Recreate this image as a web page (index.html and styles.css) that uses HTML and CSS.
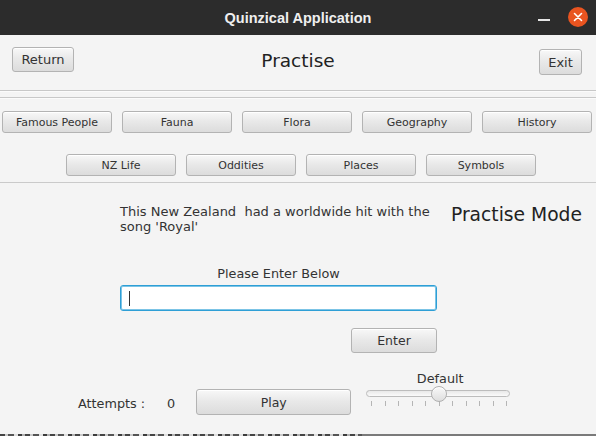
FILE: index.html
```html
<!DOCTYPE html>
<html>
<head>
<meta charset="utf-8">
<link rel="stylesheet" href="styles.css">
</head>
<body>
<div class="window">
  <div class="titlebar">
    <div></div>
    <div class="title">Quinzical Application</div>
    <div class="controls">
      <span class="minimize"></span>
      <span class="close">
        <svg width="10" height="10" viewBox="0 0 10 10"><path d="M1.5 1.5 L8.5 8.5 M8.5 1.5 L1.5 8.5" stroke="#fff" stroke-width="1.6" stroke-linecap="round"/></svg>
      </span>
    </div>
  </div>

  <div class="header">
    <button class="btn btn-return">Return</button>
    <div class="page-title">Practise</div>
    <button class="btn btn-exit">Exit</button>
  </div>
  <div class="sep"></div>
  <div class="sep sep2"></div>

  <div class="categories">
    <div class="cat-row row1">
      <button class="btn cat">Famous People</button>
      <button class="btn cat">Fauna</button>
      <button class="btn cat">Flora</button>
      <button class="btn cat">Geography</button>
      <button class="btn cat">History</button>
    </div>
    <div class="cat-row row2">
      <button class="btn cat">NZ Life</button>
      <button class="btn cat">Oddities</button>
      <button class="btn cat">Places</button>
      <button class="btn cat">Symbols</button>
    </div>
  </div>
  <div class="line"></div>

  <div class="content">
    <div class="question-row">
      <div class="question">This New Zealand&nbsp; had a worldwide hit with the song 'Royal'</div>
      <div class="mode">Practise Mode</div>
    </div>
    <div class="answer">
      <div class="prompt">Please Enter Below</div>
      <div class="input"><span class="caret"></span></div>
      <button class="btn btn-enter">Enter</button>
    </div>
    <div class="bottom-row">
      <div class="attempts">Attempts :</div>
      <div class="count">0</div>
      <button class="btn btn-play">Play</button>
      <div class="slider">
        <div class="slider-label">Default</div>
        <div class="track"></div>
        <div class="thumb"></div>
        <div class="ticks">
          <span></span><span></span><span></span><span></span><span></span><span></span><span></span><span></span><span></span><span></span><span></span>
        </div>
      </div>
    </div>
  </div>
  <div class="strip">
    <div class="strip-left"></div>
    <div class="strip-right"></div>
  </div>
</div>
</body>
</html>
```
FILE: styles.css
```css
html, body {
  margin: 0;
  padding: 0;
}
body {
  width: 596px;
  height: 436px;
  overflow: hidden;
  background: #f4f4f4;
  font-family: "DejaVu Sans", sans-serif;
  color: #333;
}
.window {
  display: flex;
  flex-direction: column;
  height: 436px;
}
.titlebar {
  height: 35px;
  background: #2c2c2c;
  display: grid;
  grid-template-columns: 1fr auto 1fr;
  align-items: center;
  flex-shrink: 0;
}
.title {
  font-family: "Liberation Sans", sans-serif;
  font-weight: bold;
  font-size: 14.5px;
  color: #efefef;
  padding-top: 1px;
}
.controls {
  display: flex;
  justify-content: flex-end;
  align-items: center;
  padding-right: 8px;
  gap: 18px;
}
.minimize {
  width: 12px;
  height: 2px;
  background: #e6e6e6;
  margin-top: 4px;
}
.close {
  width: 20px;
  height: 20px;
  border-radius: 50%;
  background: #e95420;
  display: flex;
  align-items: center;
  justify-content: center;
  margin-top: -2px;
}
.close svg { display: block; }

.btn {
  font-family: "DejaVu Sans", sans-serif;
  color: #333;
  background: linear-gradient(#f8f8f8, #e9e9e9 45%, #dcdcdc);
  border: 1px solid #b3b3b3;
  border-radius: 3px;
  box-shadow: inset 0 1px 0 #ffffff;
  padding: 0;
  margin: 0;
  cursor: default;
}

.header {
  height: 55px;
  display: grid;
  grid-template-columns: 1fr auto 1fr;
  align-items: start;
  flex-shrink: 0;
}
.btn-return {
  justify-self: start;
  margin: 12px 0 0 12px;
  width: 62px;
  height: 25px;
  font-size: 13px;
}
.page-title {
  font-size: 18.5px;
  color: #222;
  margin-top: 15px;
  line-height: 22px;
}
.btn-exit {
  justify-self: end;
  margin: 14px 14px 0 0;
  width: 43px;
  height: 26px;
  font-size: 13px;
}
.sep {
  height: 1px;
  background: #c8c8c8;
  border-bottom: 1px solid #fbfbfb;
  flex-shrink: 0;
}
.sep2 {
  margin-top: 5px;
}
.categories {
  padding-top: 12px;
  display: flex;
  flex-direction: column;
  gap: 21px;
  flex-shrink: 0;
}
.cat-row {
  display: flex;
  gap: 10px;
}
.row1 { padding-left: 2px; }
.row2 { padding-left: 66px; }
.cat {
  width: 110px;
  height: 22px;
  font-size: 11px;
}
.line {
  margin-top: 6px;
  height: 1px;
  background: #cacaca;
  flex-shrink: 0;
}
.content {
  padding-top: 21px;
  display: flex;
  flex-direction: column;
}
.question-row {
  display: flex;
  height: 30px;
  align-items: flex-start;
}
.question {
  margin-left: 120px;
  width: 318px;
  font-size: 13px;
  line-height: 15px;
}
.mode {
  margin-left: 13px;
  font-size: 18.7px;
  line-height: 22px;
  color: #222;
  margin-top: 0;
  white-space: nowrap;
}
.answer {
  margin-left: 120px;
  width: 317px;
  margin-top: 32px;
  display: flex;
  flex-direction: column;
}
.prompt {
  text-align: center;
  font-size: 12.8px;
  line-height: 16px;
}
.input {
  margin-top: 3px;
  height: 26px;
  box-sizing: border-box;
  background: #fff;
  border: 1px solid #2e9fd6;
  border-radius: 3px;
  box-shadow: inset 0 0 0 1px #7cc4e6;
  display: flex;
  align-items: center;
  padding-left: 8px;
}
.caret {
  width: 1px;
  height: 15px;
  background: #333;
}
.btn-enter {
  align-self: flex-end;
  margin-top: 17px;
  width: 86px;
  height: 25px;
  font-size: 12.5px;
}
.bottom-row {
  margin-top: 18px;
  display: flex;
  align-items: flex-start;
}
.attempts {
  margin-left: 78px;
  margin-top: 25px;
  font-size: 12.8px;
  line-height: 15px;
}
.count {
  margin-left: 22px;
  margin-top: 25px;
  font-size: 12.8px;
  line-height: 15px;
}
.btn-play {
  margin-left: 21px;
  margin-top: 18px;
  width: 155px;
  height: 26px;
  font-size: 12.5px;
}
.slider {
  position: relative;
  margin-left: 15px;
  width: 144px;
}
.slider-label {
  text-align: center;
  font-size: 12.8px;
  line-height: 15px;
  padding-left: 4px;
}
.track {
  margin-top: 4px;
  height: 7px;
  box-sizing: border-box;
  border: 1px solid #bcbcbc;
  border-radius: 4px;
  background: linear-gradient(#e8e8e8, #fafafa);
}
.thumb {
  position: absolute;
  left: 65px;
  top: 15px;
  width: 16px;
  height: 16px;
  box-sizing: border-box;
  border-radius: 50%;
  border: 1px solid #b0b0b0;
  background: linear-gradient(#f9f9f9, #dedede);
  box-shadow: inset 0 1px 0 #fff;
}
.ticks {
  margin-top: 4px;
  height: 5px;
  display: flex;
  justify-content: space-between;
  padding: 0 3px 0 5px;
}
.ticks span {
  width: 1px;
  height: 5px;
  background: #b5b5b5;
}
.strip {
  margin-top: auto;
  height: 2px;
  display: flex;
  flex-shrink: 0;
}
.strip-left {
  width: 362px;
  background: repeating-linear-gradient(90deg, #444 0 5px, #c8c8c8 5px 8px, #555 8px 14px, #e0e0e0 14px 18px, #3c3c3c 18px 22px, #b0b0b0 22px 25px);
}
.strip-right {
  flex: 1;
  background: #7a7a7a;
}
```
